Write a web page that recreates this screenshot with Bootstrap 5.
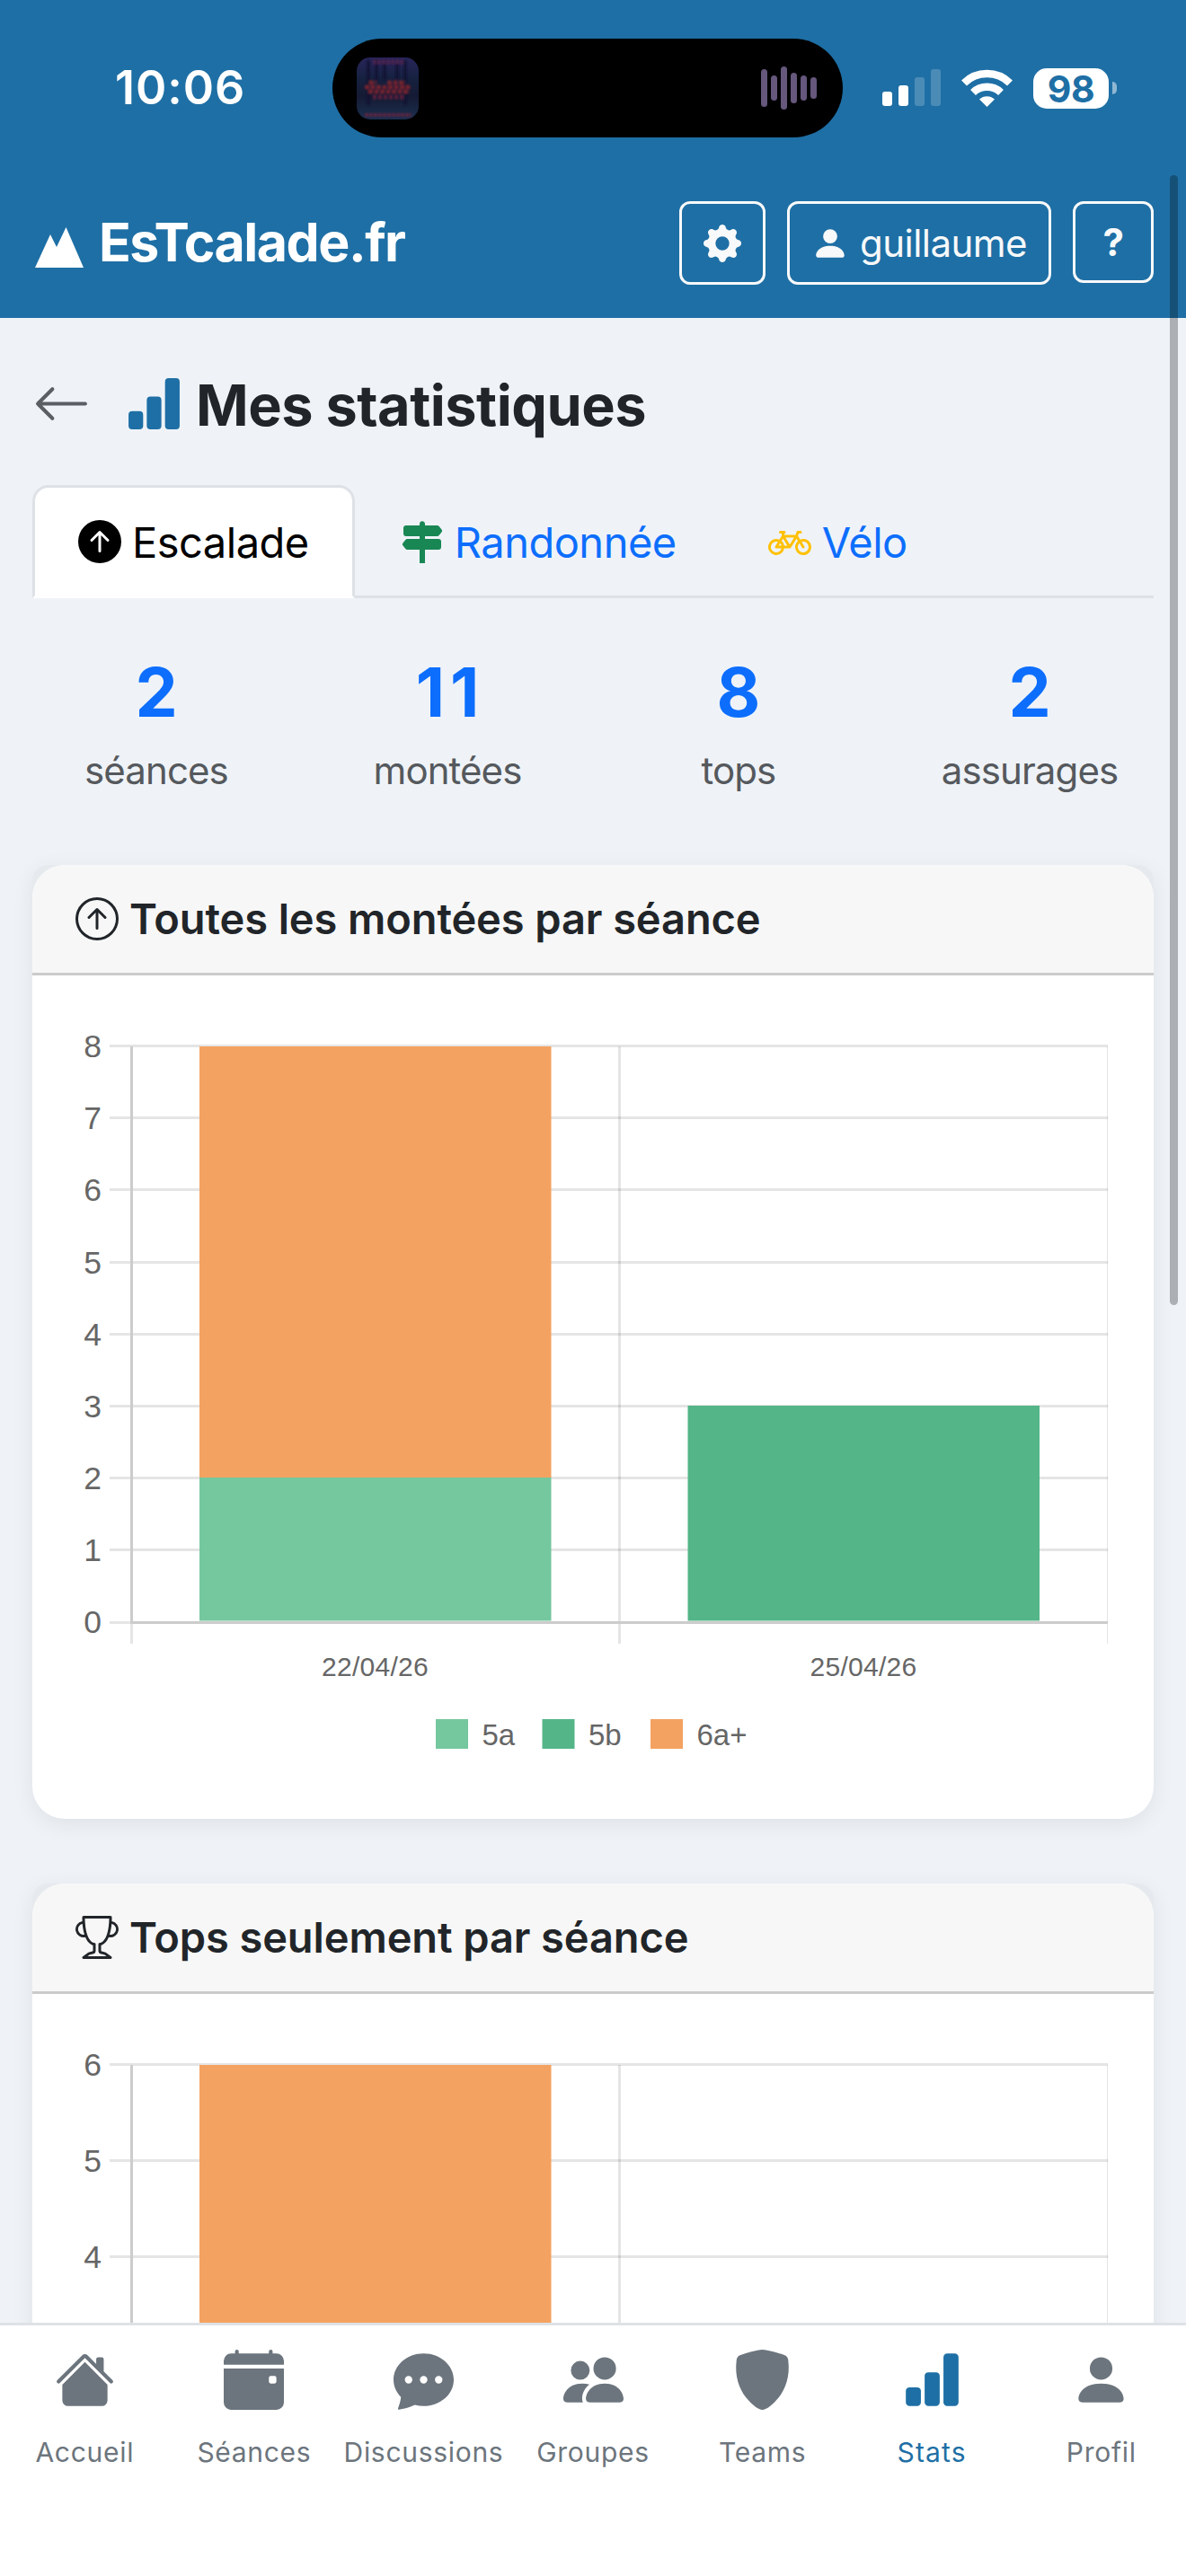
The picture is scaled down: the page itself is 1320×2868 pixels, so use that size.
<!DOCTYPE html>
<html lang="fr">
<head>
<meta charset="utf-8">
<meta name="viewport" content="width=device-width, initial-scale=1">
<title>EsTcalade.fr - Mes statistiques</title>
<link rel="stylesheet" href="https://cdn.jsdelivr.net/npm/bootstrap@5.3.0/dist/css/bootstrap.min.css">
<style>
  :root { --brand: #1e6fa5; }
  body { font-family: Inter, "Liberation Sans", sans-serif; background: #eff3f8; color: #212529; }
  svg { display: block; flex: none; }
  .screen { height: 2868px; overflow: hidden; }
  .topbar { background: var(--brand); height: 354px; }

  /* system status bar */
  .status { height: 196px; padding: 0 77px 0 128px; }
  .clock { font-size: 52px; font-weight: 600; letter-spacing: .96px; line-height: 60px; width: 242px; }
  .island { width: 568px; height: 110px; border-radius: 55px; background: #000; padding: 0 29px 0 27px; }
  .wifi { margin: 0 23px; }
  .battery { width: 84px; height: 45px; border-radius: 15px; background: #fff; color: var(--brand); font-size: 41px; font-weight: 700; line-height: 46px; letter-spacing: -.5px; }
  .nub { width: 5px; height: 14px; border-radius: 0 5px 5px 0; background: rgba(255,255,255,.5); margin-left: 4px; }

  /* app bar */
  .appbar { padding: 28px 36px 0 39px; height: 158px; }
  .brandname { font-size: 59px; font-weight: 700; letter-spacing: -1.5px; line-height: 70px; margin-left: 17px; }
  .btn-top { --bs-btn-color: #f8f9fa; --bs-btn-border-color: #f8f9fa; --bs-btn-border-width: 3px; --bs-btn-border-radius: 12px; --bs-btn-padding-x: 24px; --bs-btn-padding-y: 0;
    height: 93px; display: flex; align-items: center; font-size: 42px; line-height: 60px; letter-spacing: -.54px; }
  .btn-top svg + span { margin-left: 12px; }
  .btn-help { width: 90px; height: 91px; font-weight: 700; justify-content: center; --bs-btn-padding-x: 0; }

  main { padding: 0 36px; min-height: 0; overflow: hidden; }
  .titlebar { height: 186px; padding-top: 5px; }
  .titlebar h1 { font-size: 63px; font-weight: 700; letter-spacing: -.5px; line-height: 76px; margin: 3px 0 0 14px; }
  .sport-tabs { --bs-nav-tabs-border-width: 3px; --bs-nav-tabs-border-color: #dee2e6; --bs-nav-tabs-border-radius: 18px; --bs-nav-link-color: #0d6efd;
    --bs-nav-link-padding-x: 48px; --bs-nav-link-padding-y: 0; --bs-nav-tabs-link-active-color: #000; --bs-nav-tabs-link-active-border-color: #dee2e6 #dee2e6 #fff; height: 126px; }
  .sport-tabs .nav-link { height: 126px; display: flex; align-items: center; font-size: 47px; line-height: 60px; letter-spacing: -.5px; }
  .sport-tabs span { margin: 2px 0 0 12px; }

  .totals { margin: 59px -24px 75px; }
  .total-n { font-size: 75px; font-weight: 700; line-height: 91px; color: #0d6efd; }
  .total-n.two-digits { letter-spacing: 6px; padding-left: 6px; }
  .total-l { font-size: 42px; line-height: 60px; letter-spacing: -.9px; color: #55595d; margin-top: 12px; }

  .card-back { border-radius: 18px 18px 36px 36px; background: #e6eaee; box-shadow: 0 6px 24px rgba(0,0,0,.07); margin-bottom: 72px; }
  .chart-card { --bs-card-border-width: 0; --bs-card-border-radius: 36px; --bs-card-inner-border-radius: 36px; --bs-card-bg: #fff; overflow: hidden; }
  .chart-card .card-header { height: 123px; border-bottom: 3px solid #cbcbcb; background: #f7f7f7; padding: 0 48px; font-size: 47px; font-weight: 600; letter-spacing: -.1px; line-height: 60px; }
  .chart-card .card-header svg { margin-right: 12px; }
  .tick { font-family: "Liberation Sans", Arial, sans-serif; font-size: 35.5px; fill: #666; }
  .tick-x { font-size: 30px; }
  .tick-l { font-size: 33px; }

  .tabbar { height: 282px; background: #fff; border-top: 3px solid #dee2e6; }
  .tabbar a { flex: 1 1 0; color: #6c757d; text-decoration: none; padding-top: 27px; font-size: 30px; letter-spacing: .7px; line-height: 40px; min-width: 0; }
  .tabbar a span { margin-top: 27px; }
  .tabbar a.active { color: var(--brand); letter-spacing: 1.2px; }
  .scroll-thumb { position: absolute; left: 1302px; top: 195px; width: 9px; height: 1258px; border-radius: 5px; background: rgba(0,0,0,.28); z-index: 5; }
</style>
<script src="https://cdn.jsdelivr.net/npm/bootstrap@5.3.0/dist/js/bootstrap.bundle.min.js"></script>
</head>
<body>
<svg width="0" height="0" class="position-absolute" aria-hidden="true">
  <symbol id="i-gear" viewBox="0 0 16 16"><path d="M9.405 1.05c-.413-1.4-2.397-1.4-2.81 0l-.1.34a1.464 1.464 0 0 1-2.105.872l-.31-.17c-1.283-.698-2.686.705-1.987 1.987l.169.311c.446.82.023 1.841-.872 2.105l-.34.1c-1.4.413-1.4 2.397 0 2.81l.34.1a1.464 1.464 0 0 1 .872 2.105l-.17.31c-.698 1.283.705 2.686 1.987 1.987l.311-.169a1.464 1.464 0 0 1 2.105.872l.1.34c.413 1.4 2.397 1.4 2.81 0l.1-.34a1.464 1.464 0 0 1 2.105-.872l.31.17c1.283.698 2.686-.705 1.987-1.987l-.169-.311a1.464 1.464 0 0 1 .872-2.105l.34-.1c1.4-.413 1.4-2.397 0-2.81l-.34-.1a1.464 1.464 0 0 1-.872-2.105l.17-.31c.698-1.283-.705-2.686-1.987-1.987l-.311.169a1.464 1.464 0 0 1-2.105-.872l-.1-.34zM8 10.93a2.929 2.929 0 1 1 0-5.86 2.929 2.929 0 0 1 0 5.858z"/></symbol>
  <symbol id="i-person" viewBox="0 0 16 16"><path d="M3 14s-1 0-1-1 1-4 6-4 6 3 6 4-1 1-1 1H3zm5-6a3 3 0 1 0 0-6 3 3 0 0 0 0 6z"/></symbol>
  <symbol id="i-left" viewBox="0 0 16 16"><path d="M15 8a.5.5 0 0 0-.5-.5H2.707l3.147-3.146a.5.5 0 1 0-.708-.708l-4 4a.5.5 0 0 0 0 .708l4 4a.5.5 0 0 0 .708-.708L2.707 8.5H14.5A.5.5 0 0 0 15 8z"/></symbol>
  <symbol id="i-bars" viewBox="0 0 16 16"><path d="M1 11a1 1 0 0 1 1-1h2a1 1 0 0 1 1 1v3a1 1 0 0 1-1 1H2a1 1 0 0 1-1-1v-3zm5-4a1 1 0 0 1 1-1h2a1 1 0 0 1 1 1v7a1 1 0 0 1-1 1H7a1 1 0 0 1-1-1V7zm5-5a1 1 0 0 1 1-1h2a1 1 0 0 1 1 1v12a1 1 0 0 1-1 1h-2a1 1 0 0 1-1-1V2z"/></symbol>
  <symbol id="i-upfill" viewBox="0 0 16 16"><path d="M16 8A8 8 0 1 0 0 8a8 8 0 0 0 16 0zm-7.5 3.5a.5.5 0 0 1-1 0V5.707L5.354 7.854a.5.5 0 1 1-.708-.708l3-3a.5.5 0 0 1 .708 0l3 3a.5.5 0 0 1-.708.708L8.5 5.707V11.5z"/></symbol>
  <symbol id="i-up" viewBox="0 0 16 16"><path fill-rule="evenodd" d="M1 8a7 7 0 1 0 14 0A7 7 0 0 0 1 8zm15 0A8 8 0 1 1 0 8a8 8 0 0 1 16 0zm-7.5 3.5a.5.5 0 0 1-1 0V5.707L5.354 7.854a.5.5 0 1 1-.708-.708l3-3a.5.5 0 0 1 .708 0l3 3a.5.5 0 0 1-.708.708L8.5 5.707V11.5z"/></symbol>
  <symbol id="i-sign" viewBox="0 0 16 16"><path d="M7.293.707A1 1 0 0 0 7 1.414V2H2a1 1 0 0 0-1 1v2a1 1 0 0 0 1 1h5v1H2.500a1 1 0 0 0-.8.4L.725 8.700a.5.5 0 0 0 0 .6l.975 1.300a1 1 0 0 0 .8.4H7v5h2v-5h5a1 1 0 0 0 1-1V8a1 1 0 0 0-1-1H9V6h4.500a1 1 0 0 0 .8-.4l.975-1.300a.5.5 0 0 0 0-.6L14.300 2.400a1 1 0 0 0-.8-.4H9v-.586A1 1 0 0 0 7.293.707z"/></symbol>
  <symbol id="i-bike" viewBox="0 0 16 16"><path d="M4 4.500a.5.5 0 0 1 .5-.5H6a.5.5 0 0 1 0 1v.5h4.140l.386-1.158A.5.5 0 0 1 11 4h1a.5.5 0 0 1 0 1h-.64l-.311.935.807 1.290a3 3 0 1 1-.848.53l-.508-.812-2.076 3.322A.5.5 0 0 1 8 10.500H5.959a3 3 0 1 1-1.815-3.274L5 5.856V5h-.5a.5.5 0 0 1-.5-.5zm1.500 2.443-.508.814c.5.444.85 1.054.967 1.743h1.139L5.500 6.943zM8 9.057 9.598 6.500H6.402L8 9.057zM4.937 9.500a1.997 1.997 0 0 0-.487-.877l-.548.877h1.035zM3.603 8.092A2 2 0 1 0 4.937 10.500H3a.5.5 0 0 1-.424-.765l1.027-1.643zm7.947.53a2 2 0 1 0 .848-.53l1.026 1.643a.5.5 0 1 1-.848.53L11.550 8.623z"/></symbol>
  <symbol id="i-trophy" viewBox="0 0 16 16"><path d="M2.5.5A.5.5 0 0 1 3 0h10a.5.5 0 0 1 .5.5c0 .538-.012 1.05-.034 1.536a3 3 0 1 1-1.133 5.89c-.79 1.865-1.878 2.777-2.833 3.011v2.173l1.425.356c.194.048.377.135.537.255L13.3 15.1a.5.5 0 0 1-.3.9H3a.5.5 0 0 1-.3-.9l1.838-1.379c.16-.12.343-.207.537-.255L6.5 13.11v-2.173c-.955-.234-2.043-1.146-2.833-3.012a3 3 0 1 1-1.132-5.89A33.076 33.076 0 0 1 2.5.5zm.099 2.54a2 2 0 0 0 .72 3.935c-.333-1.05-.588-2.346-.72-3.935zm10.083 3.935a2 2 0 0 0 .72-3.935c-.133 1.59-.388 2.885-.72 3.935zM3.504 1c.007.517.026 1.006.056 1.469.13 2.028.457 3.546.87 4.667C5.294 9.48 6.484 10 7 10a.5.5 0 0 1 .5.5v2.61a1 1 0 0 1-.757.97l-1.426.356a.5.5 0 0 0-.179.085L4.5 15h7l-.638-.479a.501.501 0 0 0-.18-.085l-1.425-.356a1 1 0 0 1-.757-.97V10.5A.5.5 0 0 1 9 10c.516 0 1.706-.52 2.57-2.864.413-1.12.74-2.64.87-4.667.03-.463.049-.952.056-1.469H3.504z"/></symbol>
  <symbol id="i-home" viewBox="0 0 16 16"><path d="M8.707 1.5a1 1 0 0 0-1.414 0L.646 8.146a.5.5 0 0 0 .708.708L8 2.207l6.646 6.647a.5.5 0 0 0 .708-.708L13 5.793V2.5a.5.5 0 0 0-.5-.5h-1a.5.5 0 0 0-.5.5v1.293L8.707 1.5z"/><path d="m8 3.293 6 6V13.5a1.5 1.5 0 0 1-1.5 1.5h-9A1.5 1.5 0 0 1 2 13.5V9.293l6-6z"/></symbol>
  <symbol id="i-cal" viewBox="0 0 16 16"><path d="M4 .5a.5.5 0 0 0-1 0V1H2a2 2 0 0 0-2 2v1h16V3a2 2 0 0 0-2-2h-1V.5a.5.5 0 0 0-1 0V1H4V.5zM16 14V5H0v9a2 2 0 0 0 2 2h12a2 2 0 0 0 2-2zm-3.5-7h1a.5.5 0 0 1 .5.5v1a.5.5 0 0 1-.5.5h-1a.5.5 0 0 1-.5-.5v-1a.5.5 0 0 1 .5-.5z"/></symbol>
  <symbol id="i-chat" viewBox="0 0 16 16"><path d="M16 8c0 3.866-3.582 7-8 7a9.06 9.06 0 0 1-2.347-.306c-.584.296-1.925.864-4.181 1.234-.2.032-.352-.176-.273-.362.354-.836.674-1.95.77-2.966C.744 11.37 0 9.76 0 8c0-3.866 3.582-7 8-7s8 3.134 8 7zM5 8a1 1 0 1 0-2 0 1 1 0 0 0 2 0zm4 0a1 1 0 1 0-2 0 1 1 0 0 0 2 0zm3 1a1 1 0 1 0 0-2 1 1 0 0 0 0 2z"/></symbol>
  <symbol id="i-people" viewBox="0 0 16 16"><path d="M7 14s-1 0-1-1 1-4 5-4 5 3 5 4-1 1-1 1H7zm4-6a3 3 0 1 0 0-6 3 3 0 0 0 0 6zm-5.784 6A2.238 2.238 0 0 1 5 13c0-1.355.68-2.75 1.936-3.72A6.325 6.325 0 0 0 5 9c-4 0-5 3-5 4s1 1 1 1h4.216zM4.5 8a2.5 2.5 0 1 0 0-5 2.5 2.5 0 0 0 0 5z"/></symbol>
  <symbol id="i-shield" viewBox="0 0 16 16"><path d="M5.072.56C6.157.265 7.31 0 8 0s1.843.265 2.928.56c1.11.3 2.229.655 2.887.87a1.54 1.54 0 0 1 1.044 1.262c.596 4.477-.787 7.795-2.465 9.99a11.775 11.775 0 0 1-2.517 2.453 7.159 7.159 0 0 1-1.048.625c-.28.132-.581.24-.829.24s-.548-.108-.829-.24a7.158 7.158 0 0 1-1.048-.625 11.777 11.777 0 0 1-2.517-2.453C1.928 10.487.545 7.169 1.141 2.692A1.54 1.54 0 0 1 2.185 1.43 62.456 62.456 0 0 1 5.072.56z"/></symbol>
</svg>

<div class="screen d-flex flex-column position-relative">
  <header class="topbar text-white">
    <div class="status d-flex align-items-center">
      <div class="clock">10:06</div>
      <div class="island d-flex align-items-center justify-content-between">
        <svg width="69" height="69" viewBox="0 0 69 69">
          <defs>
            <linearGradient id="cover" x1="0" y1="0" x2="0" y2="1"><stop offset="0" stop-color="#29255a"/><stop offset=".35" stop-color="#15213f"/><stop offset=".62" stop-color="#151a33"/><stop offset="1" stop-color="#1b3050"/></linearGradient>
            <filter id="soft"><feGaussianBlur stdDeviation="1.3"/></filter>
          </defs>
          <rect width="69" height="69" rx="15" fill="url(#cover)"/>
          <g filter="url(#soft)">
            <path d="M13 3v50M22 2v24M31 3v22M45 3v22M54 3v50" stroke="#0f1730" stroke-width="3"/>
            <path d="M18 5h34" stroke="#4a2250" stroke-width="5" stroke-dasharray="4 1"/>
            <path d="M9 33h52M14 28h8M34 28h20M13 38h46" stroke="#74202f" stroke-width="4.500" stroke-dasharray="5 1.500"/>
            <path d="M18 44h34" stroke="#5c1f3a" stroke-width="5" stroke-dasharray="4 2"/>
            <path d="M9 64h52" stroke="#5b2340" stroke-width="4" stroke-dasharray="4 1"/>
          </g>
        </svg>
        <svg width="62" height="50" viewBox="0 0 62 50" fill="#66577c">
          <rect x="0" y="4" width="7" height="42" rx="3.5"/><rect x="11" y="11" width="7" height="28" rx="3.5"/><rect x="22" y="1" width="7" height="48" rx="3.5"/><rect x="33" y="8" width="7" height="34" rx="3.5"/><rect x="44" y="11" width="7" height="28" rx="3.5"/><rect x="55" y="13" width="7" height="24" rx="3.5"/>
        </svg>
      </div>
      <div class="d-flex align-items-center ms-auto">
        <svg width="65" height="42" viewBox="0 0 65 42" fill="#fff"><rect y="25" width="11" height="16" rx="3"/><rect x="18" y="18" width="11" height="23" rx="3"/><g opacity=".2"><rect x="36" y="9" width="11" height="32" rx="3"/><rect x="54" y="0" width="11" height="41" rx="3"/></g></svg>
        <svg width="57" height="42" viewBox="0 0 57 42" class="wifi" fill="none" stroke="#fff" stroke-width="8.5"><path d="M3 15.5a36.5 36.5 0 0 1 51 0"/><path d="M13 26a22.5 22.5 0 0 1 31 0"/><path d="M20 33.5a12.5 12.5 0 0 1 17 0L28.500 42z" fill="#fff" stroke="none"/></svg>
        <div class="battery text-center">98</div><div class="nub"></div>
      </div>
    </div>
    <nav class="appbar d-flex align-items-start">
      <div class="d-flex align-items-center">
        <svg width="54" height="91" viewBox="0 0 54 91" fill="#fff"><path d="M0 74 17 37l7 14L34.500 29 54 74z"/></svg>
        <div class="brandname">EsTcalade.fr</div>
      </div>
      <div class="d-flex align-items-start gap-4 ms-auto">
        <button class="btn btn-top" aria-label="Paramètres"><svg width="42" height="42" fill="currentColor"><use href="#i-gear"/></svg></button>
        <button class="btn btn-top"><svg width="42" height="42" fill="currentColor"><use href="#i-person"/></svg><span>guillaume</span></button>
        <button class="btn btn-top btn-help">?</button>
      </div>
    </nav>
  </header>

  <main class="flex-grow-1">
    <div class="titlebar d-flex align-items-center">
      <svg width="65" height="65" fill="#5b5f64"><use href="#i-left"/></svg>
      <svg width="65" height="65" fill="#1e6fa5" class="ms-auto-0" style="margin-left:38px"><use href="#i-bars"/></svg>
      <h1>Mes statistiques</h1>
    </div>
    <ul class="nav nav-tabs sport-tabs flex-nowrap">
      <li class="nav-item"><a class="nav-link active" href="#"><svg width="48" height="48" fill="currentColor"><use href="#i-upfill"/></svg><span>Escalade</span></a></li>
      <li class="nav-item"><a class="nav-link" href="#"><svg width="48" height="48" fill="#198754"><use href="#i-sign"/></svg><span>Randonnée</span></a></li>
      <li class="nav-item"><a class="nav-link" href="#"><svg width="48" height="48" fill="#ffc107"><use href="#i-bike"/></svg><span>Vélo</span></a></li>
    </ul>
    <div class="totals row g-0 text-center">
      <div class="col-3"><div class="total-n">2</div><div class="total-l">séances</div></div>
      <div class="col-3"><div class="total-n two-digits">11</div><div class="total-l">montées</div></div>
      <div class="col-3"><div class="total-n">8</div><div class="total-l">tops</div></div>
      <div class="col-3"><div class="total-n">2</div><div class="total-l">assurages</div></div>
    </div>

    <div class="card-back"><div class="card chart-card">
      <div class="card-header d-flex align-items-center"><svg width="48" height="48" fill="currentColor"><use href="#i-up"/></svg>Toutes les montées par séance</div>
      <svg width="1248" height="939" viewBox="36 1086 1248 939">
        <g stroke="#000" stroke-opacity=".1" stroke-width="3">
          <path d="M122 1164.500H1233M122 1244.500H1233M122 1324.500H1233M122 1405.500H1233M122 1485.500H1233M122 1565.500H1233M122 1645.500H1233M122 1725.500H1233M122 1806.500H1233"/>
          <path d="M146.500 1808V1830M689.500 1165V1830"/>
          <path d="M1232.500 1165V1830" stroke-width="1"/>
        </g>
        <path d="M146.500 1165V1808M146 1806.500H1233" stroke="#cccccc" stroke-width="3"/>
        <rect x="222" y="1165" width="391.500" height="480" fill="#f4a261"/>
        <rect x="222" y="1645" width="391.500" height="159.500" fill="#75c79e"/>
        <rect x="765.500" y="1565" width="391.500" height="239.500" fill="#54b588"/>
        <g class="tick" text-anchor="end"><text x="113" y="1177">8</text><text x="113" y="1257">7</text><text x="113" y="1337">6</text><text x="113" y="1418">5</text><text x="113" y="1498">4</text><text x="113" y="1578">3</text><text x="113" y="1658">2</text><text x="113" y="1738">1</text><text x="113" y="1818">0</text></g>
        <g class="tick tick-x" text-anchor="middle" letter-spacing=".3"><text x="417.500" y="1866">22/04/26</text><text x="961" y="1866">25/04/26</text></g>
        <rect x="485" y="1914" width="36" height="33" fill="#75c79e"/><rect x="603.500" y="1914" width="36" height="33" fill="#54b588"/><rect x="724" y="1914" width="36" height="33" fill="#f4a261"/>
        <g class="tick tick-l"><text x="536.500" y="1943">5a</text><text x="655" y="1943">5b</text><text x="775.500" y="1943">6a+</text></g>
      </svg>
    </div></div>

    <div class="card-back"><div class="card chart-card">
      <div class="card-header d-flex align-items-center"><svg width="48" height="48" fill="currentColor"><use href="#i-trophy"/></svg>Tops seulement par séance</div>
      <svg width="1248" height="939" viewBox="36 2220 1248 939">
        <g stroke="#000" stroke-opacity=".1" stroke-width="3">
          <path d="M122 2298.500H1233M122 2405.500H1233M122 2512.500H1233M122 2619.500H1233"/>
          <path d="M689.500 2299V2964"/>
          <path d="M1232.500 2299V2964" stroke-width="1"/>
        </g>
        <path d="M146.500 2299V2940M146 2940.500H1233" stroke="#cccccc" stroke-width="3"/>
        <rect x="222" y="2299" width="391.500" height="641" fill="#f4a261"/>
        <g class="tick" text-anchor="end"><text x="113" y="2311">6</text><text x="113" y="2418">5</text><text x="113" y="2525">4</text></g>
      </svg>
    </div></div>
  </main>

  <nav class="tabbar d-flex flex-shrink-0 position-relative">
    <a class="d-flex flex-column align-items-center" href="#"><svg width="67" height="67" fill="currentColor"><use href="#i-home"/></svg><span>Accueil</span></a>
    <a class="d-flex flex-column align-items-center" href="#"><svg width="67" height="67" fill="currentColor"><use href="#i-cal"/></svg><span>Séances</span></a>
    <a class="d-flex flex-column align-items-center" href="#"><svg width="67" height="67" fill="currentColor"><use href="#i-chat"/></svg><span>Discussions</span></a>
    <a class="d-flex flex-column align-items-center" href="#"><svg width="67" height="67" fill="currentColor"><use href="#i-people"/></svg><span>Groupes</span></a>
    <a class="d-flex flex-column align-items-center" href="#"><svg width="67" height="67" fill="currentColor"><use href="#i-shield"/></svg><span>Teams</span></a>
    <a class="d-flex flex-column align-items-center active" href="#"><svg width="67" height="67" fill="currentColor"><use href="#i-bars"/></svg><span>Stats</span></a>
    <a class="d-flex flex-column align-items-center" href="#"><svg width="67" height="67" fill="currentColor"><use href="#i-person"/></svg><span>Profil</span></a>
  </nav>
  <div class="scroll-thumb"></div>
</div>
</body>
</html>
